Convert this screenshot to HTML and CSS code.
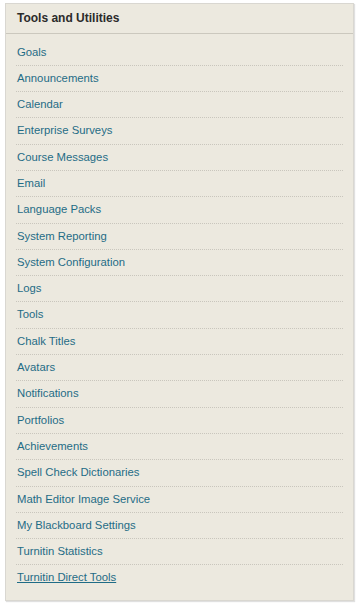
FILE: index.html
```
<!DOCTYPE html>
<html lang="en">
<head>
    <meta charset="UTF-8">
    <meta name="viewport" content="width=device-width, initial-scale=1.0">
    <title>Tools and Utilities</title>
    <link rel="stylesheet" href="styles.css">
</head>
<body>
    <div class="panel">
        <h2 class="panel-title">Tools and Utilities</h2>
        <ul class="tool-list">
            <li><a href="#">Goals</a></li>
            <li><a href="#">Announcements</a></li>
            <li><a href="#">Calendar</a></li>
            <li><a href="#">Enterprise Surveys</a></li>
            <li><a href="#">Course Messages</a></li>
            <li><a href="#">Email</a></li>
            <li><a href="#">Language Packs</a></li>
            <li><a href="#">System Reporting</a></li>
            <li><a href="#">System Configuration</a></li>
            <li><a href="#">Logs</a></li>
            <li><a href="#">Tools</a></li>
            <li><a href="#">Chalk Titles</a></li>
            <li><a href="#">Avatars</a></li>
            <li><a href="#">Notifications</a></li>
            <li><a href="#">Portfolios</a></li>
            <li><a href="#">Achievements</a></li>
            <li><a href="#">Spell Check Dictionaries</a></li>
            <li><a href="#">Math Editor Image Service</a></li>
            <li><a href="#">My Blackboard Settings</a></li>
            <li><a href="#">Turnitin Statistics</a></li>
            <li><a href="#" class="active">Turnitin Direct Tools</a></li>
        </ul>
    </div>
</body>
</html>
```

FILE: styles.css
```
body {
    margin: 0;
    padding: 3px 5px;
    background: #fff;
    font-family: "Liberation Sans", Arial, sans-serif;
}

.panel {
    width: 349px;
    box-sizing: border-box;
    background: #ece9df;
    border: 1px solid #d9d7d1;
    box-shadow: 1px 1px 1px rgba(0, 0, 0, 0.12);
    padding-bottom: 9px;
}

.panel-title {
    margin: 0;
    height: 29px;
    line-height: 29px;
    padding: 0 11px;
    font-size: 12px;
    font-weight: bold;
    color: #2b2b2b;
    border-bottom: 1px solid #cbc8be;
}

.tool-list {
    list-style: none;
    margin: 0 10px;
    padding: 5.5px 0 0;
}

.tool-list li {
    height: 25.3px;
    line-height: 25.3px;
    padding-left: 1px;
    border-bottom: 1px dotted #c9c6bd;
    font-size: 11.3px;
}

.tool-list li:last-child {
    border-bottom: none;
}

.tool-list a {
    color: #1f6c86;
    text-decoration: none;
}

.tool-list a.active {
    text-decoration: underline;
}
```
